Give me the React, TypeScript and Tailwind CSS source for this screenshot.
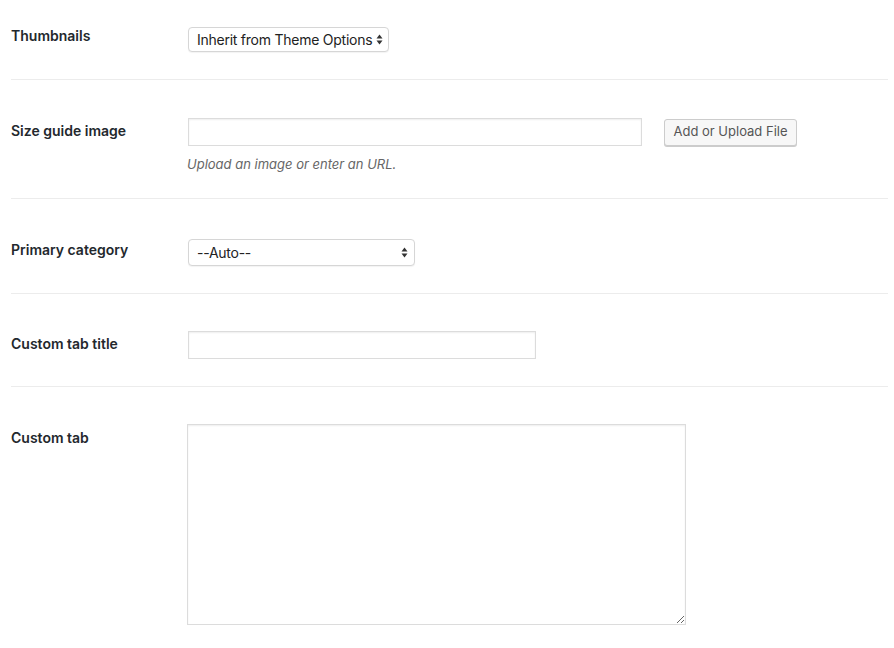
function Arrows() {
  return (
    <svg width="7" height="11" viewBox="0 0 7 11" className="shrink-0" aria-hidden="true">
      <path d="M3.5 0.5 L6.5 4.5 L0.5 4.5 Z" fill="#333" />
      <path d="M3.5 10.5 L6.5 6.5 L0.5 6.5 Z" fill="#333" />
    </svg>
  );
}

function Select({ value, className }: { value: string; className: string }) {
  return (
    <div
      className={
        "flex items-center justify-between gap-[4px] rounded-[4px] border border-[#d6d6d6] bg-white pl-[8px] pr-[6px] text-[14px] tracking-[-0.25px] whitespace-nowrap text-[#222] shadow-[0_1px_1px_rgba(0,0,0,0.05)] " +
        className
      }
    >
      <span>{value}</span>
      <Arrows />
    </div>
  );
}

function Row({
  label,
  labelPad,
  bodyPad,
  last,
  children,
}: {
  label: string;
  labelPad: string;
  bodyPad: string;
  last?: boolean;
  children: React.ReactNode;
}) {
  return (
    <div className={"flex " + (last ? "" : "border-b border-[#ececec]")}>
      <div className={"w-[177px] shrink-0 text-[14px] leading-[20px] font-semibold text-[#23282d] " + labelPad}>{label}</div>
      <div className={"flex-1 " + bodyPad}>{children}</div>
    </div>
  );
}

export default function App() {
  return (
    <div className="min-h-[648px] bg-white pl-[11px] pr-[6px] font-['Inter',sans-serif]">
      <Row label="Thumbnails" labelPad="pt-[26px]" bodyPad="pt-[27px] pb-[27px]">
        <Select value="Inherit from Theme Options" className="h-[25px] w-[201px]" />
      </Row>

      <Row label="Size guide image" labelPad="pt-[41px]" bodyPad="pt-[38px] pb-[25px]">
        <div className="flex items-center gap-[22px]">
          <input
            type="text"
            className="h-[28px] w-[454px] border border-[#dcdcdc] bg-white shadow-[inset_0_1px_2px_rgba(0,0,0,0.07)] outline-none"
          />
          <button className="h-[27px] w-[133px] rounded-[3px] border border-[#cccccc] bg-[#f7f7f7] text-[13px] text-[#555] shadow-[0_1px_0_#cccccc]">
            Add or Upload File
          </button>
        </div>
        <p className="mt-[9px] -ml-[1px] text-[13px] leading-[18px] italic text-[#666]">Upload an image or enter an URL.</p>
      </Row>

      <Row label="Primary category" labelPad="pt-[41px]" bodyPad="pt-[40px] pb-[27px]">
        <Select value="--Auto--" className="h-[27px] w-[227px]" />
      </Row>

      <Row label="Custom tab title" labelPad="pt-[40px]" bodyPad="pt-[37px] pb-[27px]">
        <input
          type="text"
          className="block h-[28px] w-[348px] border border-[#dcdcdc] bg-white shadow-[inset_0_1px_2px_rgba(0,0,0,0.07)] outline-none"
        />
      </Row>

      <Row label="Custom tab" labelPad="pt-[41px]" bodyPad="pt-[37px] pb-[22px]" last>
        <textarea className="-ml-[1px] block h-[201px] w-[499px] border border-[#dcdcdc] bg-white shadow-[inset_0_1px_2px_rgba(0,0,0,0.07)] outline-none" />
      </Row>
    </div>
  );
}
